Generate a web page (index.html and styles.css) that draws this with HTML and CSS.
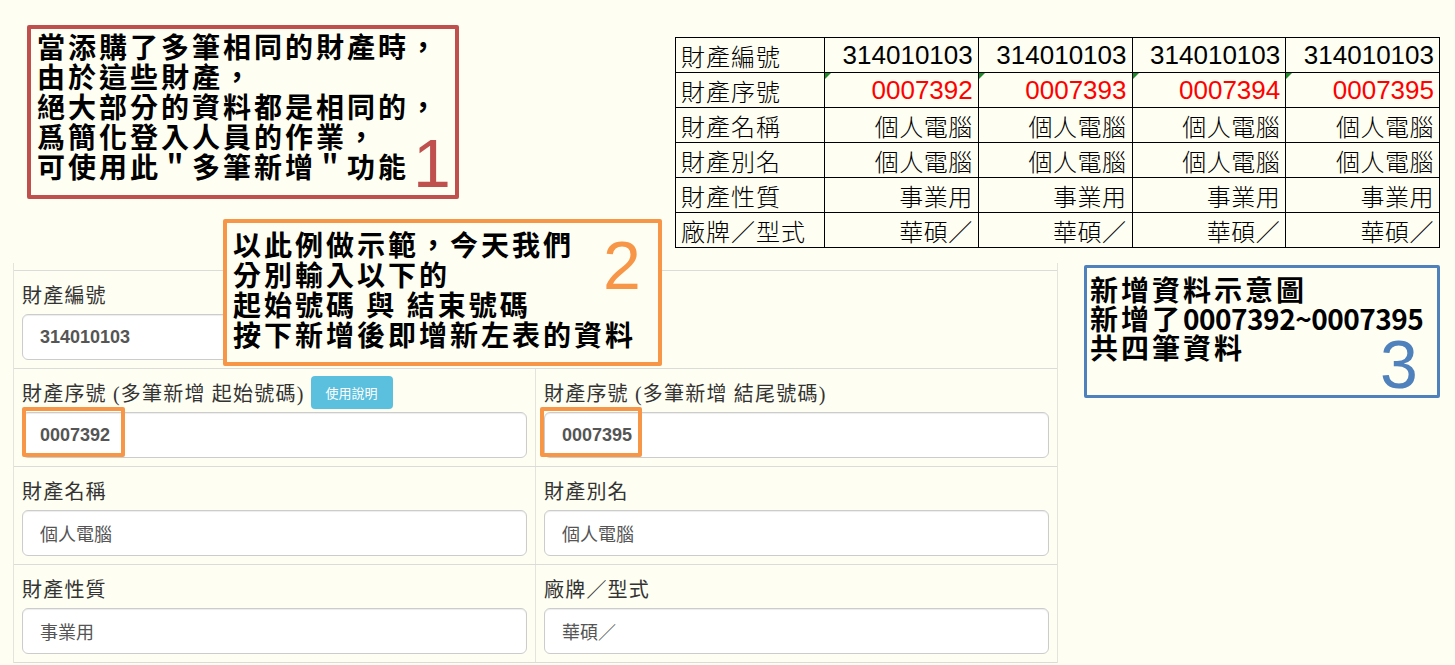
FILE: index.html
```html
<!DOCTYPE html>
<html lang="zh-Hant">
<head>
<meta charset="utf-8">
<title>多筆新增</title>
<link rel="stylesheet" href="styles.css">
</head>
<body>
<main class="page">
  <form class="form">
    <div class="row">
      <div class="cell">
        <div class="lbl">財產編號</div>
        <input class="field num" value="314010103" readonly>
      </div>
      <div class="cell cell-empty"></div>
    </div>
    <div class="row">
      <div class="cell">
        <div class="lbl">財產序號 (多筆新增 起始號碼)<span class="btn-info">使用說明</span></div>
        <div class="field-wrap">
          <input class="field num" value="0007392" readonly>
          <span class="hl hl-left"></span>
        </div>
      </div>
      <div class="cell cell-r">
        <div class="lbl">財產序號 (多筆新增 結尾號碼)</div>
        <div class="field-wrap">
          <input class="field num" value="0007395" readonly>
          <span class="hl hl-right"></span>
        </div>
      </div>
    </div>
    <div class="row">
      <div class="cell">
        <div class="lbl">財產名稱</div>
        <input class="field" value="個人電腦" readonly>
      </div>
      <div class="cell cell-r">
        <div class="lbl">財產別名</div>
        <input class="field" value="個人電腦" readonly>
      </div>
    </div>
    <div class="row">
      <div class="cell">
        <div class="lbl">財產性質</div>
        <input class="field" value="事業用" readonly>
      </div>
      <div class="cell cell-r">
        <div class="lbl">廠牌／型式</div>
        <input class="field" value="華碩／" readonly>
      </div>
    </div>
  </form>

  <table class="sheet">
    <colgroup><col class="c-head"><col class="c-val"><col class="c-val"><col class="c-val"><col class="c-val"></colgroup>
    <tr><th>財產編號</th><td class="d">314010103</td><td class="d">314010103</td><td class="d">314010103</td><td class="d">314010103</td></tr>
    <tr><th>財產序號</th><td class="d red mark">0007392</td><td class="d red mark">0007393</td><td class="d red mark">0007394</td><td class="d red mark">0007395</td></tr>
    <tr><th>財產名稱</th><td>個人電腦</td><td>個人電腦</td><td>個人電腦</td><td>個人電腦</td></tr>
    <tr><th>財產別名</th><td>個人電腦</td><td>個人電腦</td><td>個人電腦</td><td>個人電腦</td></tr>
    <tr><th>財產性質</th><td>事業用</td><td>事業用</td><td>事業用</td><td>事業用</td></tr>
    <tr><th>廠牌／型式</th><td>華碩／</td><td>華碩／</td><td>華碩／</td><td>華碩／</td></tr>
  </table>

  <aside class="note note-1">
    <p>當添購了多筆相同的財產時，</p>
    <p>由於這些財產，</p>
    <p>絕大部分的資料都是相同的，</p>
    <p>爲簡化登入人員的作業，</p>
    <p>可使用此＂多筆新增＂功能</p>
    <span class="badge badge-1">1</span>
  </aside>

  <aside class="note note-2">
    <p>以此例做示範，今天我們</p>
    <p>分別輸入以下的</p>
    <p>起始號碼 與 結束號碼</p>
    <p>按下新增後即增新左表的資料</p>
    <span class="badge badge-2">2</span>
  </aside>

  <aside class="note note-3">
    <p>新增資料示意圖</p>
    <p>新增了<span class="lat">0007392~0007395</span></p>
    <p>共四筆資料</p>
    <span class="badge badge-3">3</span>
  </aside>
</main>
</body>
</html>
```
FILE: styles.css
```css
* { box-sizing: border-box; }
html, body { margin: 0; padding: 0; }
body {
  background: #fefef2;
  font-family: "Noto Sans CJK TC", "Noto Sans", sans-serif;
  color: #333;
  overflow: hidden;
}
.page {
  position: relative;
  display: flow-root;
  width: 1455px;
  height: 665px;
}

/* ---------- form ---------- */
.form {
  margin: 263px 0 0 13px;
  width: 1045px;
  padding-top: 7px;
  border-left: 1px solid #e4e4dc;
  border-right: 1px solid #e4e4dc;
}
.row {
  display: grid;
  grid-template-columns: 521px 522px;
  border-top: 1px solid #dcdcd6;
}
.row:last-child { border-bottom: 1px solid #dcdcd6; }
.cell { padding: 8px; }
.cell-r { border-left: 1px solid #e4e4dc; }
.lbl {
  display: flex;
  align-items: center;
  gap: 6px;
  height: 30px;
  margin-bottom: 5px;
  font-family: "Liberation Serif", "Noto Sans CJK TC", serif;
  font-size: 20px;
  letter-spacing: 1.2px;
  color: #333;
  white-space: nowrap;
}
.btn-info {
  display: inline-flex;
  align-items: center;
  justify-content: center;
  width: 82px;
  height: 33px;
  border-radius: 4px;
  background: #5bc0de;
  color: #fff;
  font-family: "Noto Sans CJK TC", sans-serif;
  font-size: 13px;
  letter-spacing: 0;
}
.field-wrap { position: relative; }
.field {
  display: block;
  width: 100%;
  height: 46px;
  padding: 10px 17px;
  border: 1px solid #ccc;
  border-radius: 6px;
  background: #fff;
  box-shadow: inset 0 1px 1px rgba(0,0,0,.075);
  font-family: "Liberation Sans", "Noto Sans CJK TC", sans-serif;
  font-size: 18px;
  color: #555;
  outline: none;
}
.field.num { font-weight: 700; }
.hl {
  position: absolute;
  top: -5px;
  height: 50px;
  border: 4px solid #f79646;
  border-radius: 2px;
}
.hl-left { left: 0; width: 103px; }
.hl-right { left: -4px; width: 102px; }

/* ---------- spreadsheet ---------- */
.sheet {
  position: absolute;
  left: 675px;
  top: 37px;
  border-collapse: collapse;
  table-layout: fixed;
  width: 764px;
  background: #fefef2;
  color: #000;
}
.c-head { width: 149px; }
.c-val { width: 153.75px; }
.sheet th, .sheet td {
  height: 35px;
  border: 1px solid #000;
  padding: 0 5px;
  font-family: "Noto Sans CJK TC", sans-serif;
  font-weight: 300;
  font-size: 24px;
  letter-spacing: 1px;
  line-height: 33px;
  white-space: nowrap;
}
.sheet th { text-align: left; }
.sheet td { text-align: right; letter-spacing: 0.5px; }
.sheet td.d {
  font-family: "Liberation Sans", sans-serif;
  font-size: 26px;
  letter-spacing: 0;
}
.sheet td.red { color: #ff0000; }
.sheet td.mark { position: relative; }
.sheet td.mark::before {
  content: "";
  position: absolute;
  left: 0;
  top: 0;
  border-top: 6px solid #1f8a2a;
  border-right: 6px solid transparent;
}

/* ---------- callouts ---------- */
.note {
  position: absolute;
  background: #fefef2;
  color: #000;
  font-family: "Noto Sans CJK TC", sans-serif;
  font-weight: 700;
  font-size: 28px;
  line-height: 30px;
  letter-spacing: 3px;
  white-space: nowrap;
}
.note p { margin: 0; }
.note-1 {
  left: 27px; top: 25px; width: 432px; height: 174px;
  border: 4px solid #c0504d; border-radius: 2px;
  padding: 2px 0 0 6px;
}
.note-2 {
  left: 223px; top: 219px; width: 439px; height: 147px;
  border: 4px solid #f79646; border-radius: 2px;
  padding: 6px 0 0 6px;
}
.note-3 {
  left: 1084px; top: 265px; width: 356px; height: 133px;
  border: 3px solid #4f81bd; border-radius: 2px;
  padding: 7px 0 0 3px;
  line-height: 29px;
}
.lat { letter-spacing: -0.5px; }
.badge {
  position: absolute;
  font-family: "Liberation Sans Narrow", "Liberation Sans", sans-serif;
  font-weight: 400;
  font-size: 68px;
  line-height: 68px;
  letter-spacing: 0;
}
.badge-1 { left: 382px; top: 100px; color: #c0504d; }
.badge-2 { left: 376px; top: 8px; color: #f79646; }
.badge-3 { left: 293px; top: 62px; color: #4f81bd; }
```
